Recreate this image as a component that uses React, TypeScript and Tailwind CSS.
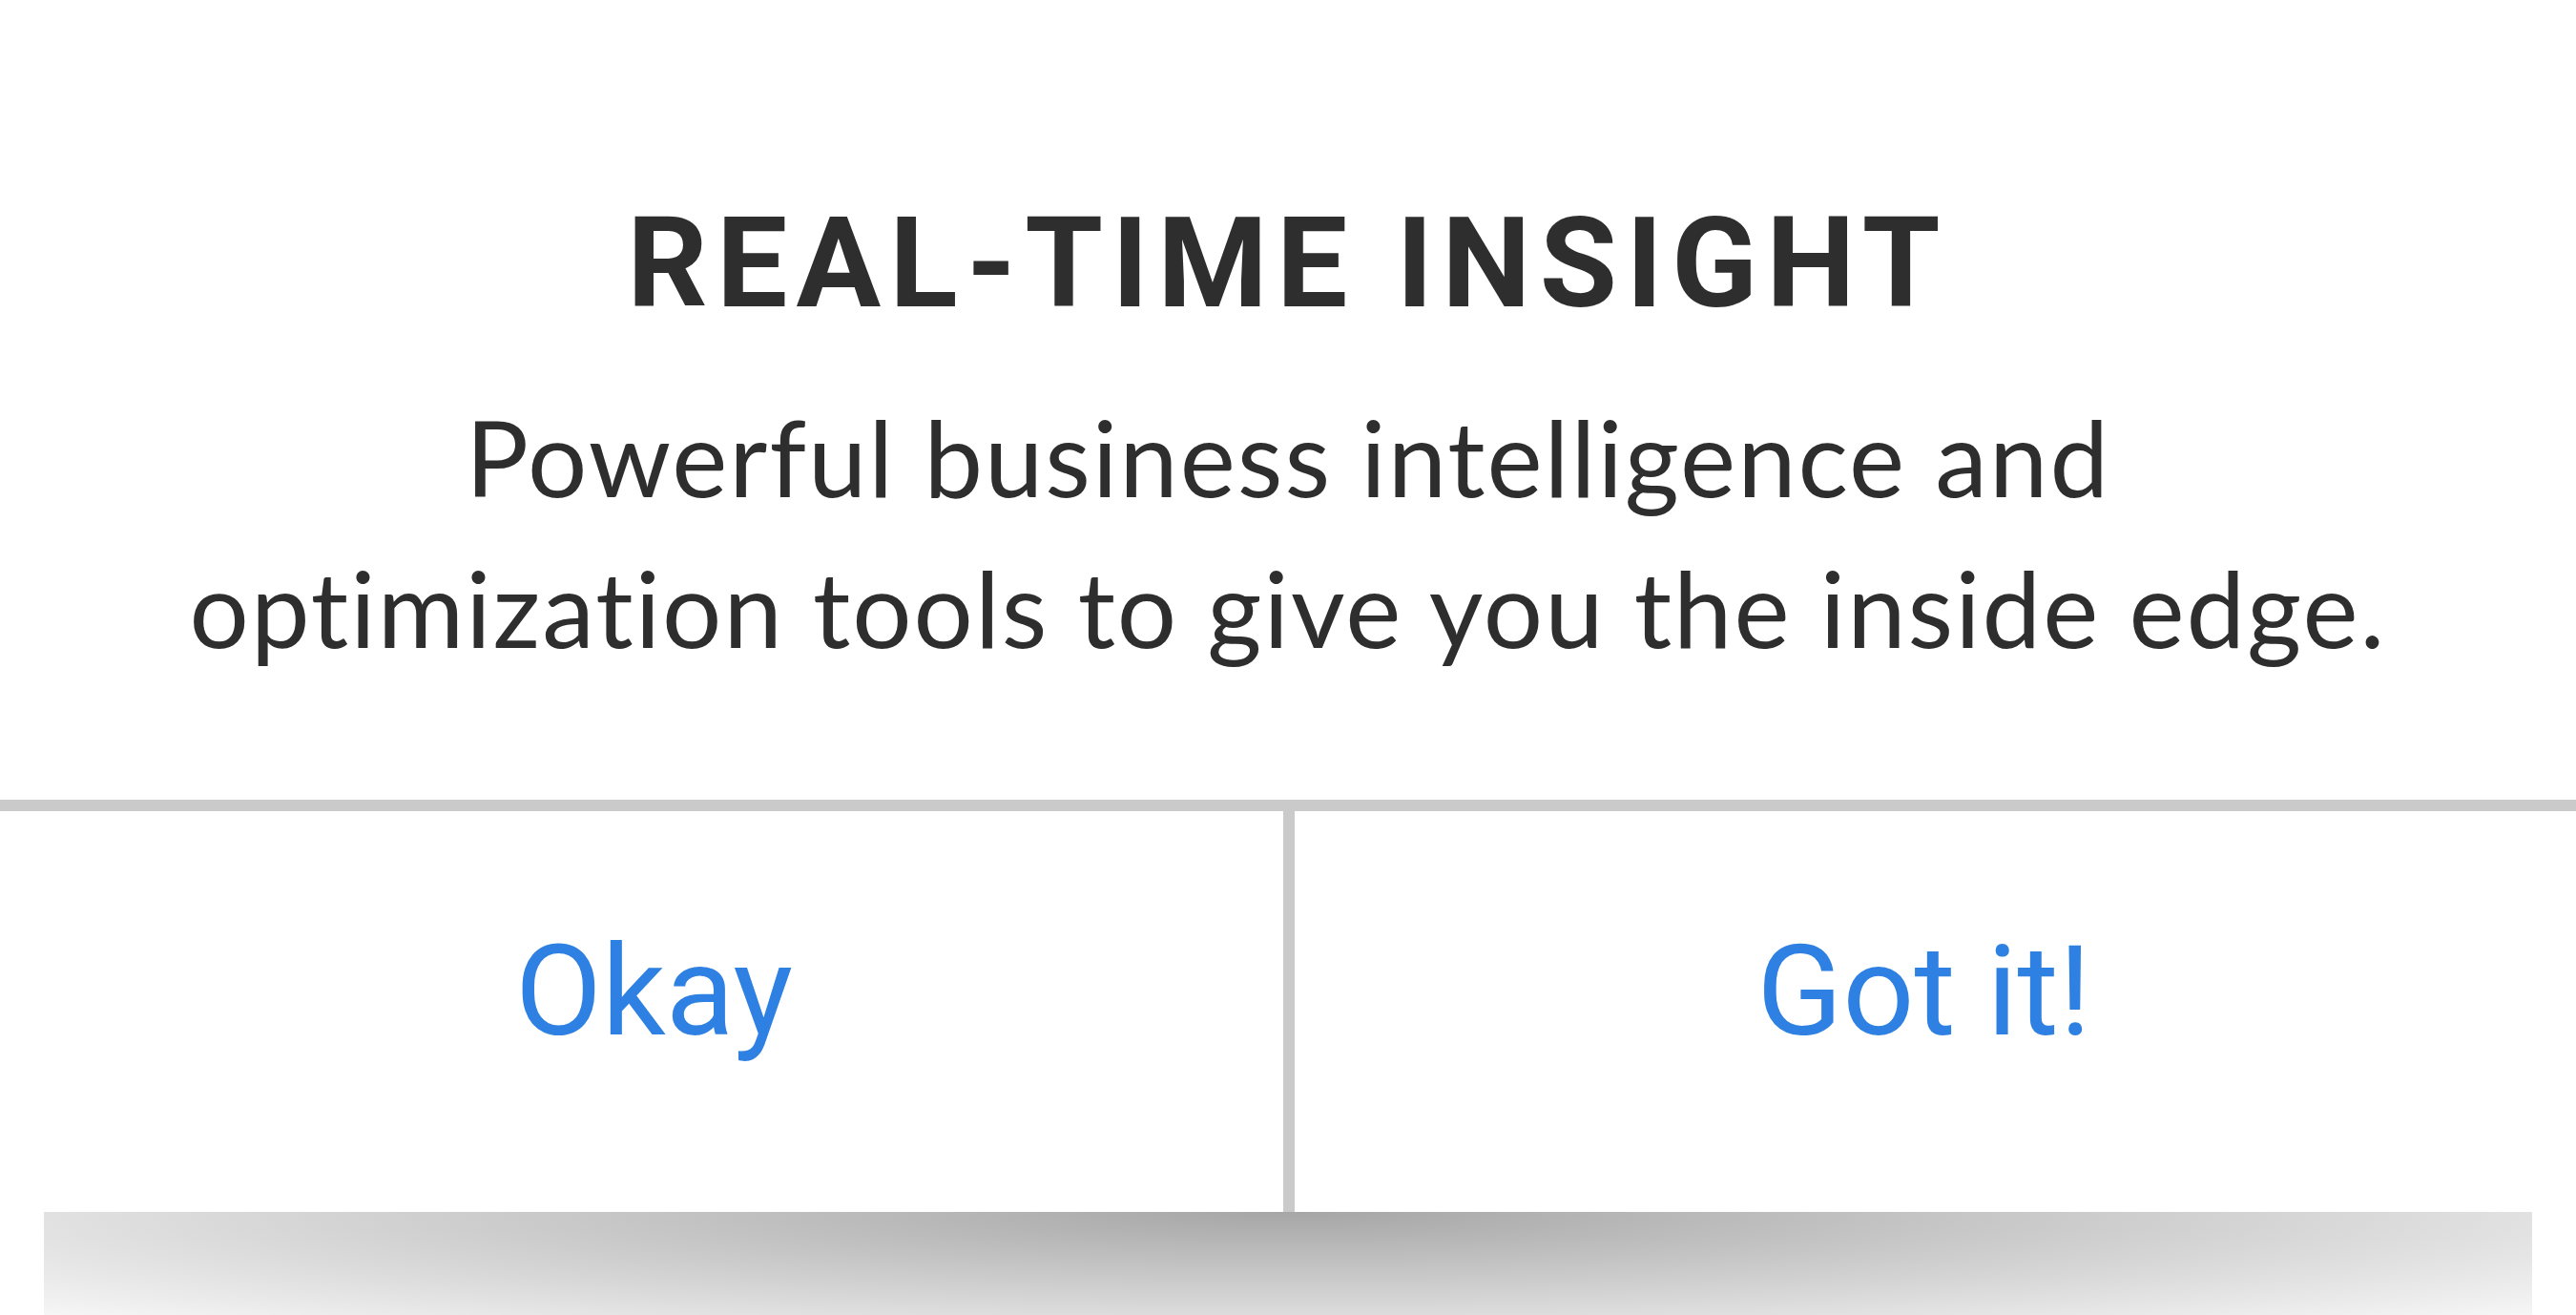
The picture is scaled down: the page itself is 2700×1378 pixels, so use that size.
import React from "react";

const buttons = [
  { label: "Okay", cls: "pl-[26px] border-r-[12px] border-[#cacaca]" },
  { label: "Got it!", cls: "pr-[24px]" },
];

const App: React.FC = () => {
  return (
    <div className="w-[2700px] h-[1378px] bg-white overflow-hidden flex flex-col">
      {/* Message */}
      <div className="flex flex-col items-center pt-[210px] pb-[123px]">
        <h1 className="font-['Roboto',sans-serif] font-bold text-[132px] leading-[132px] tracking-[0.07em] text-[#2e2e2e]">
          REAL-TIME INSIGHT
        </h1>
        <p className="mt-[57px] font-['Lato',sans-serif] font-normal text-[110px] leading-[158px] tracking-[2px] [font-variant-ligatures:none] text-[#2e2e2e] text-center">
          Powerful business intelligence and
          <br />
          optimization tools to give you the inside edge.
        </p>
      </div>

      {/* Actions */}
      <div className="flex h-[432px] border-t-[12px] border-[#cacaca]">
        {buttons.map((b) => (
          <button
            key={b.label}
            className={`flex-1 flex items-center justify-center pb-[42px] font-['Roboto',sans-serif] text-[132px] text-[#2e80e2] ${b.cls}`}
          >
            {b.label}
          </button>
        ))}
      </div>

      {/* Shadow under the sheet */}
      <div className="mx-[46px] h-[108px] bg-[radial-gradient(1850px_168px_at_50%_0%,#a6a6a6,#fafafa)]" />
    </div>
  );
};

export default App;
